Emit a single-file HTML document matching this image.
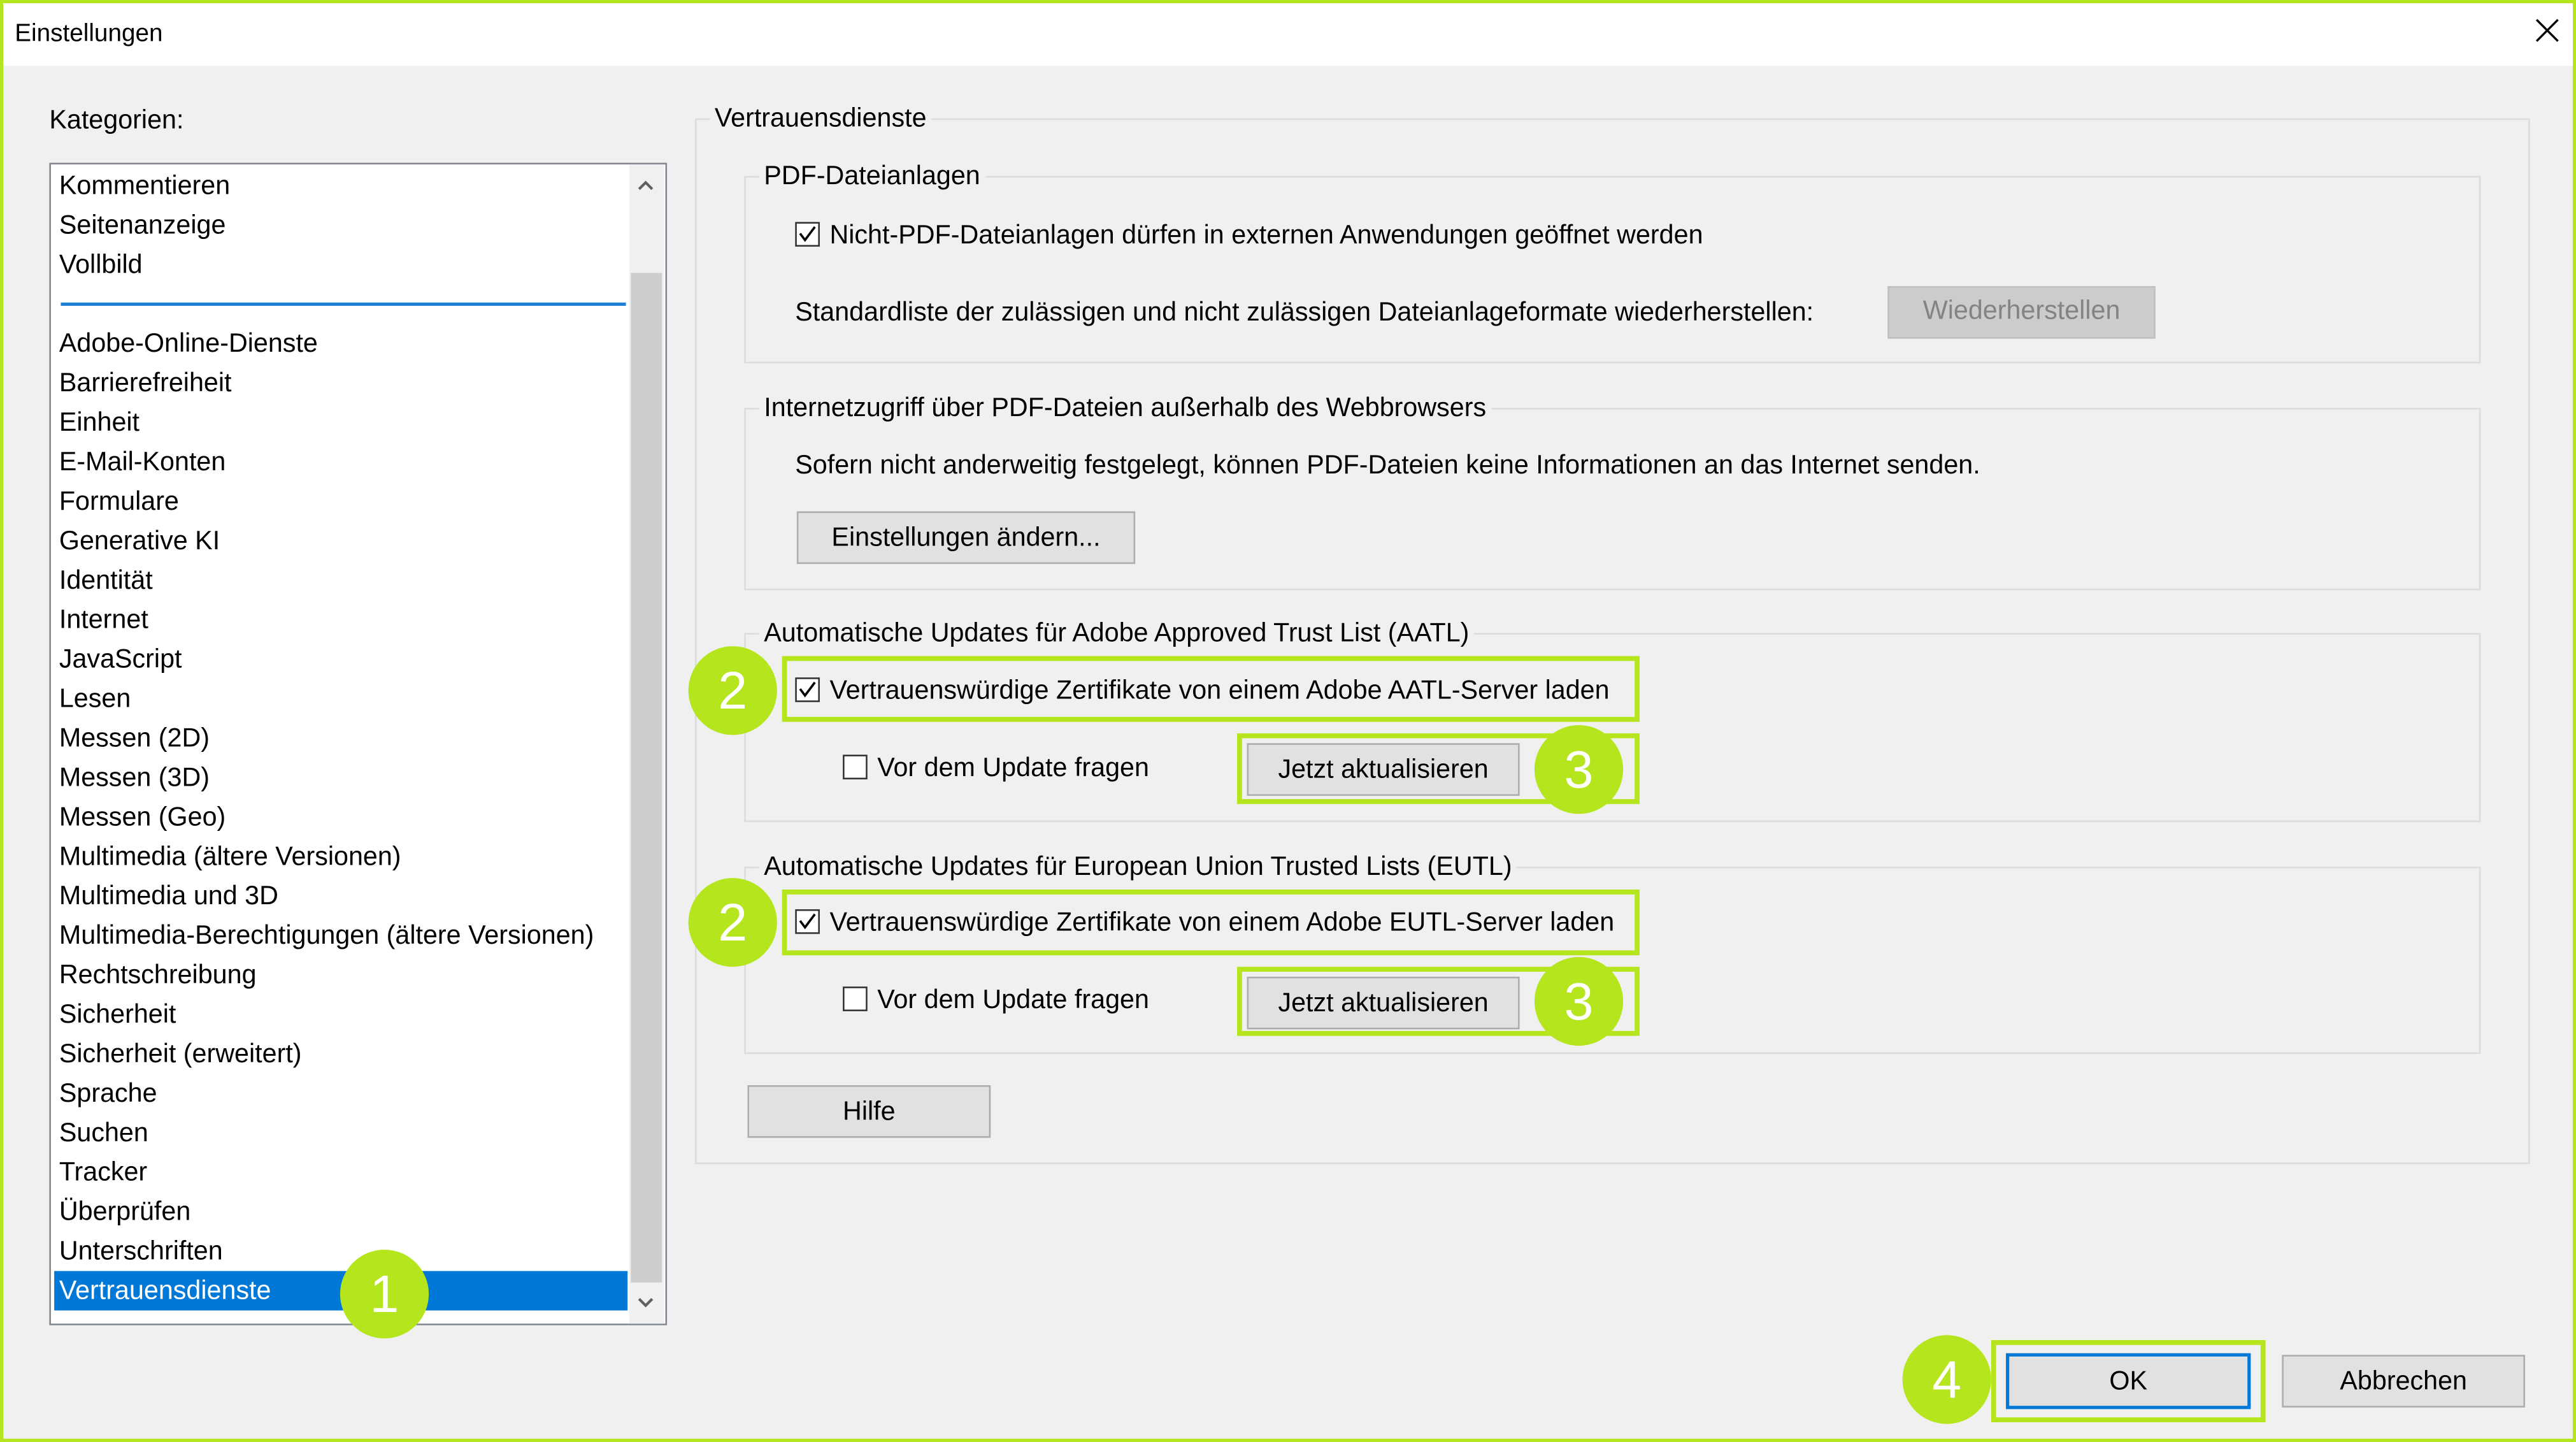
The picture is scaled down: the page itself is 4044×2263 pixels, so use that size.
<!DOCTYPE html>
<html><head><meta charset="utf-8"><style>
html,body{margin:0;padding:0;width:4044px;height:2263px;overflow:hidden;background:#b5e61d}
#w{position:absolute;left:0;top:0;width:1568px;height:877px;transform:scale(2.5791,2.5804);transform-origin:0 0;font-family:"Liberation Sans",sans-serif;font-size:16px;color:#000}
.a{position:absolute}
.t{position:absolute;white-space:nowrap;line-height:18px;transform:translateY(-8px)}
.grp{position:absolute;border:1px solid #dcdcdc}
.gt{position:absolute;background:#f0f0f0;padding:0 3px;white-space:nowrap;line-height:18px;top:-9px;left:8px}
.btn{position:absolute;background:#e1e1e1;border:1px solid #adadad;box-sizing:border-box;text-align:center;white-space:nowrap}
.cb{position:absolute;width:15px;height:15px;border:1px solid #333;background:#fff;box-sizing:border-box}
.gr{position:absolute;border:3px solid #b5e61d;box-sizing:border-box}
.c{position:absolute;width:54px;height:54px;border-radius:50%;background:#b5e61d;color:#fff;font-size:32px;text-align:center;line-height:54px}
.li{position:absolute;left:5px;white-space:nowrap;line-height:24px;top:1px}
</style></head><body><div id="w">
<div class="a" style="left:2px;top:2px;width:1564px;height:873px;background:#f0f0f0"></div>
<div class="a" style="left:2px;top:2px;width:1564px;height:38px;background:#fff"></div>
<div class="t" style="left:9px;top:20px;font-size:15px">Einstellungen</div>
<svg class="a" style="left:1543px;top:11px" width="15" height="15"><path d="M1 1L14 14M14 1L1 14" stroke="#000" stroke-width="1.3"/></svg>

<div class="t" style="left:30px;top:73px">Kategorien:</div>
<div class="a" style="left:30px;top:99px;width:374px;height:705px;background:#fff;border:1px solid #828790">
 <div class="a" style="left:352px;top:0;width:21px;height:705px;background:#f0f0f0"></div>
 <div class="a" style="left:353px;top:66px;width:19px;height:614px;background:#cdcdcd"></div>
 <svg class="a" style="left:356px;top:8px" width="12" height="10"><path d="M2 7L6 3L10 7" stroke="#606060" stroke-width="1.6" fill="none"/></svg>
 <svg class="a" style="left:356px;top:687px" width="12" height="10"><path d="M2 3L6 7L10 3" stroke="#606060" stroke-width="1.6" fill="none"/></svg>
 <div style="position:absolute;left:0;top:1px;width:350px">
 <div class="li" style="top:1px">Kommentieren</div>
 <div class="li" style="top:25px">Seitenanzeige</div>
 <div class="li" style="top:49px">Vollbild</div>
 <div class="li" style="top:97px">Adobe-Online-Dienste</div>
 <div class="li" style="top:121px">Barrierefreiheit</div>
 <div class="li" style="top:145px">Einheit</div>
 <div class="li" style="top:169px">E-Mail-Konten</div>
 <div class="li" style="top:193px">Formulare</div>
 <div class="li" style="top:217px">Generative KI</div>
 <div class="li" style="top:241px">Identität</div>
 <div class="li" style="top:265px">Internet</div>
 <div class="li" style="top:289px">JavaScript</div>
 <div class="li" style="top:313px">Lesen</div>
 <div class="li" style="top:337px">Messen (2D)</div>
 <div class="li" style="top:361px">Messen (3D)</div>
 <div class="li" style="top:385px">Messen (Geo)</div>
 <div class="li" style="top:409px">Multimedia (ältere Versionen)</div>
 <div class="li" style="top:433px">Multimedia und 3D</div>
 <div class="li" style="top:457px">Multimedia-Berechtigungen (ältere Versionen)</div>
 <div class="li" style="top:481px">Rechtschreibung</div>
 <div class="li" style="top:505px">Sicherheit</div>
 <div class="li" style="top:529px">Sicherheit (erweitert)</div>
 <div class="li" style="top:553px">Sprache</div>
 <div class="li" style="top:577px">Suchen</div>
 <div class="li" style="top:601px">Tracker</div>
 <div class="li" style="top:625px">Überprüfen</div>
 <div class="li" style="top:649px">Unterschriften</div>
 </div>
 <div class="a" style="left:6px;top:84px;width:344px;height:2px;background:#1e7fd6"></div>
 <div class="a" style="left:2px;top:673px;width:349px;height:24px;background:#0078d7"></div>
 <div class="li" style="top:674px;color:#fff">Vertrauensdienste</div>
</div>
<div class="c" style="left:207px;top:760px">1</div>

<div class="grp" style="left:423px;top:72px;width:1115px;height:634px"><div class="gt">Vertrauensdienste</div></div>
<div class="grp" style="left:453px;top:107px;width:1055px;height:112px"><div class="gt">PDF-Dateianlagen</div></div>
<div class="cb" style="left:484px;top:135px"></div>
<svg class="a" style="left:485px;top:136px" width="13" height="13"><path d="M2 6L5 10L11 2" stroke="#000" stroke-width="1.4" fill="none"/></svg>
<div class="t" style="left:505px;top:143px">Nicht-PDF-Dateianlagen dürfen in externen Anwendungen geöffnet werden</div>
<div class="t" style="left:484px;top:190px">Standardliste der zulässigen und nicht zulässigen Dateianlageformate wiederherstellen:</div>
<div class="btn" style="left:1149px;top:174px;width:163px;height:32px;line-height:30px;background:#cccccc;border-color:#bfbfbf;color:#838383">Wiederherstellen</div>

<div class="grp" style="left:453px;top:248px;width:1055px;height:109px"><div class="gt">Internetzugriff über PDF-Dateien außerhalb des Webbrowsers</div></div>
<div class="t" style="left:484px;top:283px">Sofern nicht anderweitig festgelegt, können PDF-Dateien keine Informationen an das Internet senden.</div>
<div class="btn" style="left:485px;top:311px;width:206px;height:32px;line-height:31px">Einstellungen ändern...</div>

<div class="grp" style="left:453px;top:385px;width:1055px;height:113px"><div class="gt">Automatische Updates für Adobe Approved Trust List (AATL)</div></div>
<div class="gr" style="left:476px;top:399px;width:522px;height:40px"></div>
<div class="cb" style="left:484px;top:412px"></div>
<svg class="a" style="left:485px;top:413px" width="13" height="13"><path d="M2 6L5 10L11 2" stroke="#000" stroke-width="1.4" fill="none"/></svg>
<div class="t" style="left:505px;top:420px">Vertrauenswürdige Zertifikate von einem Adobe AATL-Server laden</div>
<div class="c" style="left:419px;top:393px">2</div>
<div class="cb" style="left:513px;top:459px"></div>
<div class="t" style="left:534px;top:467px">Vor dem Update fragen</div>
<div class="gr" style="left:753px;top:446px;width:245px;height:43px"></div>
<div class="btn" style="left:759px;top:452px;width:166px;height:32px;line-height:31px">Jetzt aktualisieren</div>
<div class="c" style="left:934px;top:441px">3</div>

<div class="grp" style="left:453px;top:527px;width:1055px;height:112px"><div class="gt">Automatische Updates für European Union Trusted Lists (EUTL)</div></div>
<div class="gr" style="left:476px;top:541px;width:522px;height:40px"></div>
<div class="cb" style="left:484px;top:553px"></div>
<svg class="a" style="left:485px;top:554px" width="13" height="13"><path d="M2 6L5 10L11 2" stroke="#000" stroke-width="1.4" fill="none"/></svg>
<div class="t" style="left:505px;top:561px">Vertrauenswürdige Zertifikate von einem Adobe EUTL-Server laden</div>
<div class="c" style="left:419px;top:534px">2</div>
<div class="cb" style="left:513px;top:600px"></div>
<div class="t" style="left:534px;top:608px">Vor dem Update fragen</div>
<div class="gr" style="left:753px;top:588px;width:245px;height:42px"></div>
<div class="btn" style="left:759px;top:594px;width:166px;height:32px;line-height:31px">Jetzt aktualisieren</div>
<div class="c" style="left:934px;top:582px">3</div>

<div class="btn" style="left:455px;top:660px;width:148px;height:32px;line-height:31px">Hilfe</div>

<div class="gr" style="left:1212px;top:815px;width:167px;height:50px"></div>
<div class="btn" style="left:1221px;top:823px;width:149px;height:34px;line-height:31px;border:2px solid #0078d7">OK</div>
<div class="c" style="left:1158px;top:812px">4</div>
<div class="btn" style="left:1389px;top:824px;width:148px;height:32px;line-height:31px">Abbrechen</div>
</div></body></html>
